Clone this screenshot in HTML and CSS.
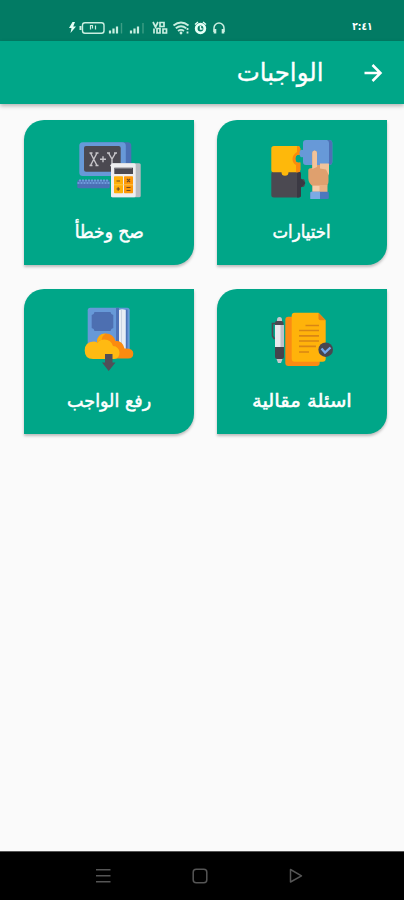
FILE: index.html
```
<!DOCTYPE html>
<html lang="ar" dir="rtl">
<head>
<meta charset="utf-8">
<title>الواجبات</title>
<link rel="stylesheet" href="styles.css">
</head>
<body>
<div class="status">
  <span class="clock">٢:٤١</span>
  <svg class="tray" width="160" height="16" viewBox="0 0 160 16" fill="none" stroke="#c9eee0" stroke-width="1.4">
    <path d="M4.500 2L1 8h2.500l-1 5L8 6.500H5.200L7 2z" fill="#e4fff5" stroke="none"/>
    <rect x="14.500" y="2.800" width="21.500" height="10.500" rx="2.500"/><path d="M12.500 6v4" stroke-width="2"/>
    <path d="M22.500 9.500V5.500h2v3M27.500 9.500V5.500" stroke-width="1.200"/>
    <path d="M42 13.500v-3M45.500 13.500v-5M49 13.500v-7M63 13.500v-3M66.500 13.500v-5M70 13.500v-7" stroke-width="2.200"/>
    <path d="M53.500 13.500V3M75 13.500V3" stroke="#3d9d84"/>
    <path d="M85 2l2.500 5L90 2M92 2.500h4v4h-4zM86 8.500v5M89 8.500h3v4.500h-3zM95 9h3.500v4H95z" stroke-width="1.700"/>
    <path d="M105.500 5.500q7.500-6 15 0M107.800 8.300q5.200-4 10.400 0M110 11q3-2.200 6 0" stroke-width="1.900"/><circle cx="113" cy="13" r="1.400" fill="#c9eee0" stroke="none"/><path d="M119.500 8v6" stroke-width="1.800" stroke-dasharray="2 1.500"/>
    <circle cx="132.500" cy="8.500" r="4.300" stroke="#e4fff5" stroke-width="2.800"/><path d="M127 4.500l3-2.500M138 4.500L135 2M132.500 6v3h2" stroke="#e4fff5"/>
    <path d="M146 12V8a5 5 0 0 1 10 0v4" stroke-width="1.500"/><path d="M147 9v4.500M155 9v4.500" stroke-width="2.600"/>
  </svg>
</div>
<header class="bar">
  <svg class="back" width="24" height="24" viewBox="0 0 24 24" fill="none" stroke="#fff" stroke-width="2.500"><path d="M3.500 12h16M11.500 4l8 8-8 8"/></svg>
  <h1><span class="t-title">الواجبات</span></h1>
</header>
<main class="grid">
  <section class="card">
    <svg width="64" height="64" viewBox="0 0 64 64">
      <path d="M4 33.500h24.500q2.500 0 2.500 3v5q4-2 4 3.500t-4 3.500v8.500q0 2.500-2.500 2.500H4q-2.700 0-2.700-2.500V36q0-2.500 2.700-2.500z" fill="#4b4951"/>
      <path d="M27 33.500h1.500q2.500 0 2.500 3v4l4.500 4.500-4.500 4.500v7.500q0 2.500-2.500 2.500H27z" fill="#3b3943"/>
      <path d="M4 8h24q2.300 0 2.300 2.500V17q-5-1-5 3.700t5 3.800V32q0 2.300-2.300 2.300h-9.500q0 3.500-3.500 3.500t-3.500-3.500H4q-2.700 0-2.700-2.300V10.500Q1.300 8 4 8z" fill="#feb80b"/>
      <path d="M27 8h1q2.300 0 2.300 2.500V17q-5-1-5 3.700t5 3.800V32q0 2.300-2.300 2.300h-2V27q-3.500-2-3.500-6t4.500-7z" fill="#fb8a0d"/>
      <path d="M36 2h23q3.300 0 3.300 3v19q0 3-3.300 3H36q-3 0-3-3v-5q-3.500 1-3.500-3.500T33 12V5q0-3 3-3z" fill="#6799d8"/>
      <path d="M57 2h2q3.300 0 3.300 3v19q0 3-3.300 3h-2q2-1 2-3V5q0-2-2-3z" fill="#4d70b5"/>
      <path d="M42.300 30V15q0-2.500 2.300-2.500T47 15v12h11.500v16q0 4-3 6H44q-5.700-3-5.700-9v-8q0-2 4-2z" fill="#dfa06e"/>
      <path d="M42.300 31V15q0-2.500 2.300-2.500T47 15v14zM50 25.500h9v12l-3-6-6-1z" fill="#f2c39a"/>
      <path d="M42.500 47h15v7.500h-15z" fill="#e9b183"/><path d="M42.500 48h7v6h-7z" fill="#f5cdaa"/>
      <rect x="40.300" y="53.700" width="18.500" height="7.200" rx="1.200" fill="#4d78bd"/><path d="M41.500 53.700H50v7.200h-9.700v-6q0-1.200 1.200-1.200z" fill="#7baae4"/>
    </svg>
    <h2><span class="t-choice">اختيارات</span></h2>
  </section>
  <section class="card">
    <svg width="64" height="64" viewBox="0 0 64 64">
      <rect x="12" y="4.300" width="42.300" height="33.700" rx="3.500" fill="#4b70b5"/>
      <rect x="2.300" y="4.300" width="46.500" height="33.700" rx="3.500" fill="#6799d8"/>
      <rect x="7" y="8" width="36.700" height="25.700" rx="2" fill="#4b4951"/>
      <path d="M13.500 15l6.500 12.500M20 15l-6.500 12.500M12.500 15h3M18.500 15h3M12.500 27.500h3M18.500 27.500h3M23 21.300h6M26 18.300v6M31.500 15l3.500 6 3.500-6M35 21v6.500M30 15h3M37 15h3M33 27.500h4" fill="none" stroke="#c7c5c9" stroke-width="1.400"/>
      <rect x=".3" y="42" width="32.500" height="8.300" rx="1.500" fill="#4c70b6"/>
      <path d="M2 42.500h30M.5 45h32" fill="none" stroke="#6e9bdb" stroke-width="1.800" stroke-dasharray="2 1"/>
      <rect x="34" y="25.300" width="29.700" height="34" rx="1.500" fill="#b9bbc1"/>
      <rect x="34" y="25.300" width="24.700" height="34" rx="1.500" fill="#eeeef0"/>
      <rect x="37.300" y="29.700" width="18.700" height="6.300" fill="#4b4951"/><path d="M38 30.500h17" stroke="#77757d"/>
      <rect x="37" y="38.300" width="9" height="17" rx=".7" fill="#ffb008"/><rect x="47" y="38.300" width="9" height="17" rx=".7" fill="#fc9808"/>
      <path d="M39.500 43h3.500M50 41l3 3M53 41l-3 3M39.500 51h3.500M41.200 49.300v3.500M49.500 49.500h4M49.500 52.500h4" fill="none" stroke="#704b25" stroke-width="1.200"/>
      <path d="M37 46.800h19" stroke="#ffcf54" stroke-width=".8"/>
    </svg>
    <h2><span class="t-truth">صح وخطأ</span></h2>
  </section>
  <section class="card">
    <svg width="64" height="64" viewBox="0 0 64 64">
      <rect x="15.300" y="9.700" width="34.400" height="49.300" rx="3" fill="#fb8b13"/>
      <path d="M24.500 5.700h24l7.200 7.500v38.500q0 3-3 3H24.500q-2.800 0-2.800-3v-43q0-3 2.800-3z" fill="#ffb30a"/>
      <path d="M48.500 5.700v5.500q0 2 2 2h5.200z" fill="#e58214"/>
      <path d="M35.500 18.500H49M29 23.500h20M29 28.800h20M29 34h20M29 39.300h17M29 45h10" fill="none" stroke="#d98614" stroke-width="1.700"/>
      <path d="M7 13q0-3 2.500-3t2.500 3v2H7zM6.500 52h6l-1.500 4H8z" fill="#c6c8ce"/>
      <path d="M5 18V15.500q0-1.500 1.500-1.500h5q2 0 2 2V18z" fill="#4b4951"/>
      <path d="M6 16.500H2.500V29l2 3" fill="none" stroke="#4b4951" stroke-width="1.700"/>
      <path d="M5 18h9v22H5z" fill="#e9e9ec"/><path d="M10.500 18H14v22h-3.500z" fill="#bfc1c9"/>
      <path d="M5 40h9v9.500q0 2.500-2.500 2.500h-4Q5 52 5 49.500z" fill="#45434c"/>
      <circle cx="55.700" cy="42.700" r="7.300" fill="#484750"/><path d="M51.500 41.500l3.500 4 5.500-5" fill="none" stroke="#76a9ed" stroke-width="2.300"/>
    </svg>
    <h2><span class="t-essay">اسئلة مقالية</span></h2>
  </section>
  <section class="card">
    <svg width="64" height="64" viewBox="0 0 64 64">
      <rect x="10.700" y=".7" width="42" height="49" rx="2.500" fill="#6799d8"/>
      <path d="M39 .7h3v49h-3zM49 2.500h1.500v45H49z" fill="#4d72b7"/>
      <path d="M42 3q3-1.500 6.700 0v45H42z" fill="#e9edf4"/><path d="M44.500 3v44" stroke="#c3cbdc" stroke-width=".8"/>
      <path d="M17.500 5h16q.3 2.500 2.800 3v13q-2.500.5-2.800 3h-16q-.3-2.500-2.800-3V8q2.500-.5 2.800-3z" fill="#4d6fb1"/>
      <path d="M20 36q0-9.500 9-9.500 7 0 9.500 7.500 7-1 9 7.500 8.800-.5 8.800 5 0 5-5 5H28z" fill="#fb8b10"/>
      <path d="M16.500 34.500q2.500 0 4 1.200 2-3.200 7-3.200 6.500 0 8.500 6.500 6 .5 6.500 6.500 0 6.500-5.500 6.500H16q-8.300 0-8.300-8.500t8.800-9z" fill="#ffba12"/>
      <path d="M20 35.500q0-9 9-9-4 2-4.200 6.200-3 .8-4.800 2.800z" fill="#ffad0c"/>
      <path d="M28 47h7.500v8.500h3L31.700 64 25 55.500h3z" fill="#514f58"/>
    </svg>
    <h2><span class="t-upload">رفع الواجب</span></h2>
  </section>
</main>
<nav class="nav">
  <svg width="18" height="18" viewBox="0 0 18 18"><path d="M3.500 2.500v12.500l11-6.200z" fill="none" stroke="#555" stroke-width="1.500" stroke-linejoin="round"/></svg>
  <svg width="18" height="18" viewBox="0 0 18 18"><rect x="2.200" y="2.200" width="13.600" height="13.600" rx="3" fill="none" stroke="#555" stroke-width="1.500"/></svg>
  <svg width="18" height="18" viewBox="0 0 18 18"><path d="M2 2.700h14.500M2 8.700h14.500M2 14.700h14.500" fill="none" stroke="#555" stroke-width="1.600"/></svg>
</nav>
</body>
</html>
```
FILE: styles.css
```
* { box-sizing: border-box; }
body {
  margin: 0;
  height: 900px;
  display: flex;
  flex-direction: column;
  background: #fafafa;
  font-family: "DejaVu Sans", "Noto Sans", sans-serif;
  color: #fff;
  overflow: hidden;
}
svg { display: block; flex: none; }
.status {
  height: 41px;
  padding: 20px 31px 0 0;
  background: #027b64;
  display: flex;
  justify-content: space-between;
}
.clock {
  font-size: 11px;
  line-height: 14px;
  font-weight: bold;
  transform: scaleX(.83);
  transform-origin: right center;
}
.tray { margin-left: 68px; }
.bar {
  height: 63px;
  background: #00a688;
  display: flex;
  align-items: center;
  padding-right: 19px;
  gap: 37px;
  box-shadow: 0 2px 4px rgba(0, 0, 0, .28);
}
h1, h2 { margin: 0; font-weight: normal; white-space: nowrap; }
h1 { font-size: 25px; line-height: 40px; }
h1 span, h2 span { display: inline-block; }
.t-title { transform: scaleX(.98); transform-origin: right center; -webkit-text-stroke: .3px #fff; }
.grid {
  flex: 1;
  display: grid;
  grid-template-columns: 170px 170px;
  grid-auto-rows: 145px;
  align-content: start;
  gap: 24px 23px;
  padding: 16px 17px 0;
}
.card {
  background: #00a688;
  border-radius: 20px 0 20px 0;
  box-shadow: 0 2px 3px rgba(0, 0, 0, .25);
  display: flex;
  flex-direction: column;
  align-items: center;
  padding-top: 18px;
}
h2 { font-size: 18px; line-height: 30px; margin-top: 15px; -webkit-text-stroke: .5px #fff; }
.t-choice { transform: scaleX(.92); }
.t-truth { transform: scaleX(.95); }
.t-essay { transform: scaleX(1.09); }
.t-upload { transform: scaleX(.975); }
.nav {
  height: 49px;
  background: #000;
  border-top: 1px solid #555;
  display: flex;
  align-items: center;
  justify-content: space-between;
  padding: 0 99px 0 94px;
}
```
